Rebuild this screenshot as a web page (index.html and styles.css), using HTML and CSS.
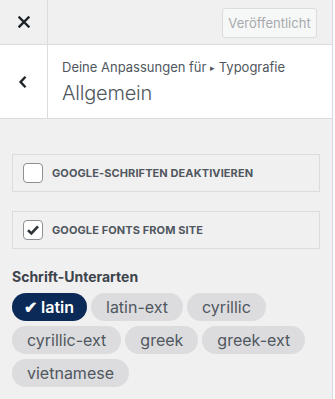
FILE: index.html
```html
<!DOCTYPE html>
<html lang="de">
<head>
    <meta charset="UTF-8">
    <meta name="viewport" content="width=device-width, initial-scale=1.0">
    <title>Typografie – Allgemein</title>
    <link rel="stylesheet" href="styles.css">
</head>
<body>
    <div class="panel">
        <!-- Kopfleiste -->
        <div class="topbar">
            <button class="close-btn" aria-label="Schließen">
                <svg width="12" height="12" viewBox="0 0 12 12">
                    <path d="M1.5 1.5 L10.5 10.5 M10.5 1.5 L1.5 10.5" stroke="#1d2327" stroke-width="2.4" stroke-linecap="square"/>
                </svg>
            </button>
            <div class="topbar-actions">
                <button class="publish-btn" disabled>Veröffentlicht</button>
            </div>
        </div>

        <!-- Abschnittstitel -->
        <div class="section-head">
            <button class="back-btn" aria-label="Zurück">
                <svg width="10" height="14" viewBox="0 0 10 14">
                    <path d="M7.5 1.8 L2.6 7 L7.5 12.2" fill="none" stroke="#1d2327" stroke-width="2.4"/>
                </svg>
            </button>
            <div class="section-titles">
                <span class="crumb">Deine Anpassungen für <span class="crumb-sep">▸</span> Typografie</span>
                <h2 class="section-title">Allgemein</h2>
            </div>
        </div>

        <!-- Einstellungen -->
        <div class="controls">
            <label class="check-box">
                <span class="checkbox"></span>
                <span class="check-label">Google-Schriften deaktivieren</span>
            </label>

            <label class="check-box">
                <span class="checkbox checked">
                    <svg width="14" height="12" viewBox="0 0 14 12">
                        <path d="M2 6.2 L5.4 9.4 L12 2.4" fill="none" stroke="#2c3338" stroke-width="2.6"/>
                    </svg>
                </span>
                <span class="check-label">Google Fonts from site</span>
            </label>

            <div class="subsets">
                <h3 class="subsets-title">Schrift-Unterarten</h3>
                <div class="pills">
                    <span class="pill active"><span class="tick">✔</span>latin</span>
                    <span class="pill">latin-ext</span>
                    <span class="pill">cyrillic</span>
                    <span class="pill">cyrillic-ext</span>
                    <span class="pill">greek</span>
                    <span class="pill">greek-ext</span>
                    <span class="pill">vietnamese</span>
                </div>
            </div>
        </div>
    </div>
</body>
</html>
```

FILE: styles.css
```css
/* customizer panel */
* {
    margin: 0;
    padding: 0;
    box-sizing: border-box;
}

body {
    font-family: Inter, "Noto Sans", "Liberation Sans", sans-serif;
    background: #fff;
    color: #1d2327;
}

.panel {
    width: 333px;
    height: 399px;
    background: #f0f0f1;
    border-right: 1px solid #dcdcde;
    overflow: hidden;
}

button {
    font-family: inherit;
    background: none;
    border: none;
}

.topbar {
    display: flex;
    height: 45px;
    border-bottom: 1px solid #dcdcde;
}

.close-btn {
    width: 48px;
    height: 44px;
    border-right: 1px solid #dcdcde;
    display: flex;
    align-items: center;
    justify-content: center;
}

.topbar-actions {
    flex: 1;
    display: flex;
    justify-content: flex-end;
    align-items: flex-start;
    padding: 8px 15px 0 0;
}

.publish-btn {
    width: 95px;
    height: 30px;
    background: #f6f7f7;
    border: 1px solid #dcdcde;
    border-radius: 3px;
    color: #a7aaad;
    font-size: 13px;
}

.section-head {
    display: flex;
    height: 74px;
    background: #fff;
    border-bottom: 1px solid #dcdcde;
}

.back-btn {
    width: 48px;
    border-right: 1px solid #dcdcde;
    display: flex;
    align-items: center;
    justify-content: center;
    padding-right: 2px;
}

.section-titles {
    padding: 13px 0 0 14px;
}

.crumb {
    display: block;
    font-size: 13px;
    line-height: 18px;
    color: #50575e;
}

.crumb-sep {
    font-size: 9px;
    vertical-align: 1px;
}

.section-title {
    font-size: 20px;
    font-weight: 300;
    line-height: 26px;
    margin-top: 3px;
    color: #50575e;
    letter-spacing: -0.2px;
}

.controls {
    padding: 35px 12px 0 12px;
}

.check-box {
    display: flex;
    align-items: center;
    gap: 9px;
    height: 38px;
    padding-left: 10px;
    border: 1px solid #dcdcde;
    margin-bottom: 19px;
}

.checkbox {
    width: 20px;
    height: 20px;
    background: #fff;
    border: 1px solid #8c8f94;
    border-radius: 4px;
    display: flex;
    align-items: center;
    justify-content: center;
}

.check-label {
    font-size: 11px;
    font-weight: 700;
    text-transform: uppercase;
    color: #50575e;
    letter-spacing: 0.1px;
}

.subsets {
    padding-top: 1px;
}

.subsets-title {
    font-size: 14px;
    font-weight: 700;
    line-height: 16px;
    color: #3c434a;
    margin-bottom: 8px;
}

.pills {
    display: flex;
    flex-wrap: wrap;
    gap: 5px 4px;
}

.pill {
    height: 28px;
    line-height: 28px;
    padding: 0 15px;
    border-radius: 14px;
    background: #dcdcde;
    color: #50575e;
    font-size: 16px;
}

.pill.active {
    background: #0b2a57;
    color: #fff;
    font-weight: 600;
    padding: 0 13px 0 12px;
}

.tick {
    margin-right: 4px;
}
```
